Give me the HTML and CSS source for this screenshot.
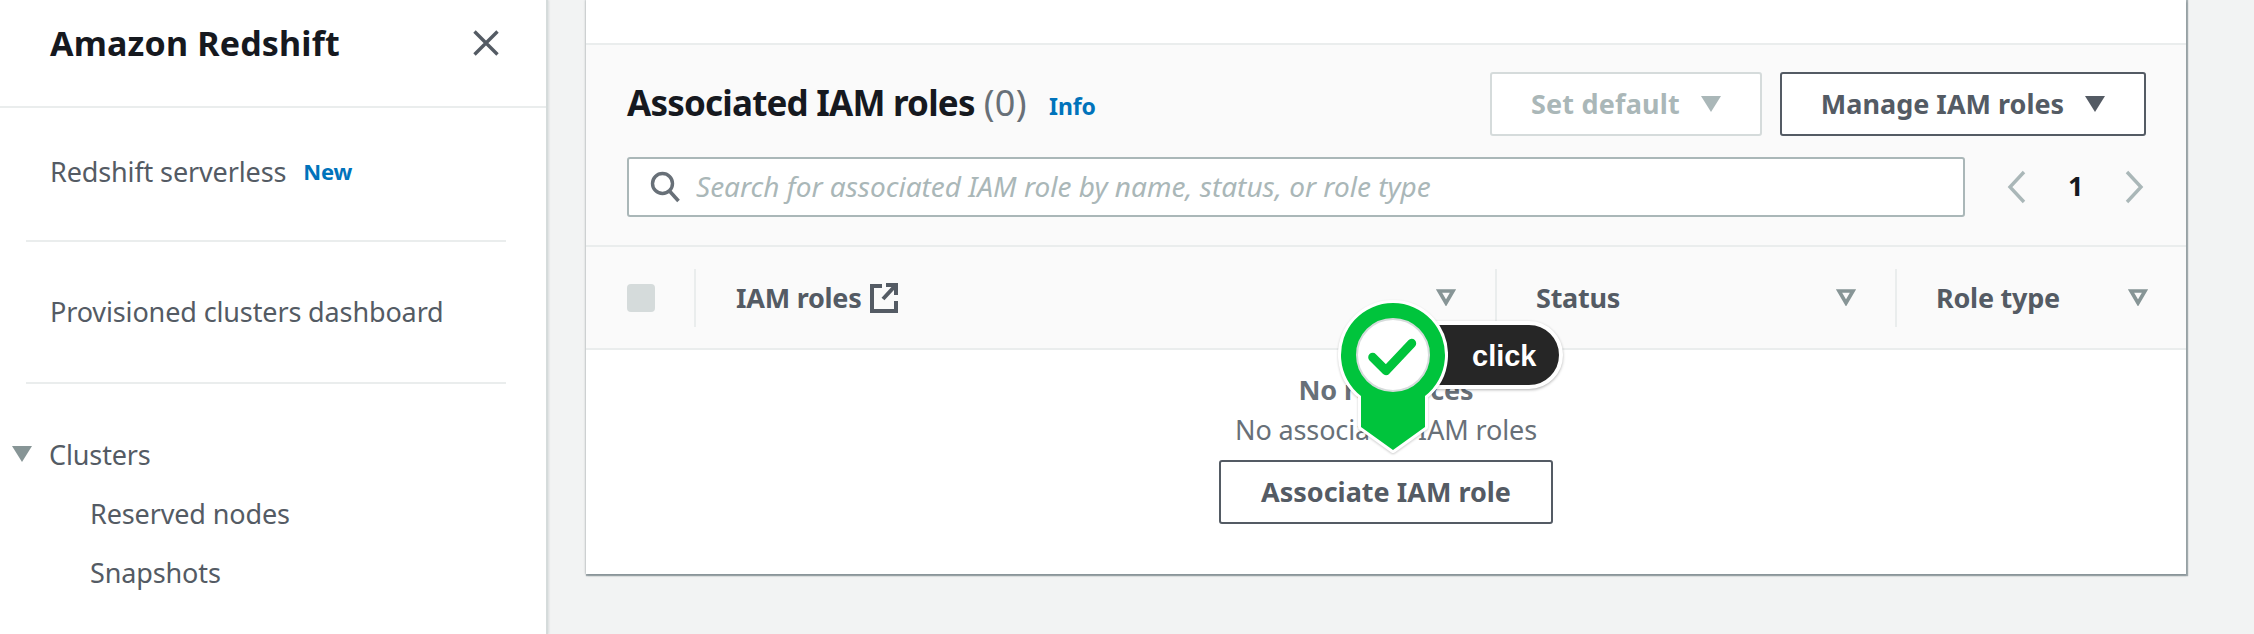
FILE: index.html
```html
<!DOCTYPE html>
<html lang="en">
<head>
  <meta charset="UTF-8">
  <title>Amazon Redshift | IAM roles</title>
  <link rel="stylesheet" href="styles.css">
</head>
<body>

  <div class="page">

    <!-- Side navigation -->
    <aside class="side">
      <div class="side-head">
        <h2>Amazon Redshift</h2>
        <svg class="close" width="26" height="26" viewBox="0 0 26 26"><path d="M1.500 1.500l23 23M24.500 1.500l-23 23" stroke="#545b64" stroke-width="3.4" fill="none"/></svg>
      </div>
      <div class="side-item side-item-first">
        <a>Redshift serverless</a>
        <span class="new">New</span>
      </div>
      <hr class="side-line">
      <div class="side-item">
        <a>Provisioned clusters dashboard</a>
      </div>
      <hr class="side-line">
      <div class="side-group">
        <svg width="20" height="16" viewBox="0 0 20 16"><path d="M0 0h20L10 16z" fill="#879596"/></svg>
        <a>Clusters</a>
      </div>
      <a class="side-sub first">Reserved nodes</a>
      <a class="side-sub">Snapshots</a>
    </aside>

    <!-- Main card -->
    <main class="main">
      <section class="card">
        <div class="card-top"></div>

        <div class="card-head">
          <div class="title-row">
            <h1><span class="title-text">Associated IAM roles</span> <span class="count">(0)</span></h1>
            <a class="info">Info</a>
            <div class="actions">
              <button class="btn btn-off">Set default
                <svg width="20" height="16" viewBox="0 0 20 16"><path d="M0 0h20L10 16z" fill="#aab7b8"/></svg>
              </button>
              <button class="btn btn-manage">Manage IAM roles
                <svg width="20" height="16" viewBox="0 0 20 16"><path d="M0 0h20L10 16z" fill="#545b64"/></svg>
              </button>
            </div>
          </div>
          <div class="search-row">
            <div class="search">
              <svg width="30" height="32" viewBox="0 0 30 32"><circle cx="12.500" cy="12.500" r="10" stroke="#687078" stroke-width="3.4" fill="none"/><path d="M19.500 20l9 10" stroke="#687078" stroke-width="3.6" fill="none"/></svg>
              <span class="search-text">Search for associated IAM role by name, status, or role type</span>
            </div>
            <div class="pager">
              <svg width="20" height="34" viewBox="0 0 20 34"><path d="M17 2L3 17l14 15" stroke="#aab7b8" stroke-width="3.4" fill="none"/></svg>
              <span class="page-num">1</span>
              <svg width="20" height="34" viewBox="0 0 20 34"><path d="M3 2l14 15L3 32" stroke="#aab7b8" stroke-width="3.4" fill="none"/></svg>
            </div>
          </div>
        </div>

        <div class="table-head">
          <div class="col-check"><span class="check"></span></div>
          <div class="col col-name">
            <span class="th">IAM roles</span>
            <svg class="ext" width="28" height="30" viewBox="0 0 28 30"><path d="M12 3H2v25h24V18M16 2h10v10M25 3L13 16" stroke="#545b64" stroke-width="4" fill="none"/></svg>
            <svg class="filter" width="20" height="17" viewBox="0 0 20 17"><path d="M3 2h14l-7 12z" stroke="#879596" stroke-width="3.6" fill="none"/></svg>
          </div>
          <div class="col col-status">
            <span class="th">Status</span>
            <svg class="filter" width="20" height="17" viewBox="0 0 20 17"><path d="M3 2h14l-7 12z" stroke="#879596" stroke-width="3.6" fill="none"/></svg>
          </div>
          <div class="col col-type">
            <span class="th">Role type</span>
            <svg class="filter" width="20" height="17" viewBox="0 0 20 17"><path d="M3 2h14l-7 12z" stroke="#879596" stroke-width="3.6" fill="none"/></svg>
          </div>
        </div>

        <div class="empty">
          <strong>No resources</strong>
          <p>No associated IAM roles</p>
          <button class="btn btn-assoc">Associate IAM role</button>
        </div>
      </section>
    </main>

    <!-- Click marker over the page -->
    <div class="marker">
      <div class="pill">click</div>
      <svg class="pin" width="116" height="160" viewBox="0 0 116 160">
        <path class="pin-body" d="M26 99A52 52 0 1 1 90 99V130L58 153L26 130Z"/>
        <circle cx="58" cy="58" r="36" fill="#fff" stroke="#d5dbdb" stroke-width="2"/>
        <path d="M37.700 60.300L51 73.700L76.700 46.300" stroke="#00c43c" stroke-width="9" stroke-linecap="round" stroke-linejoin="round" fill="none"/>
      </svg>
    </div>

  </div>

</body>
</html>
```

FILE: styles.css
```css
* {
  box-sizing: border-box;
}

html, body {
  margin: 0;
  height: 634px;
  overflow: hidden;
}

body {
  background-color: #f2f3f3;
  color: #545b64;
  font-family: "Noto Sans", sans-serif;
  font-size: 27px;
  letter-spacing: -0.13px;
}

.page {
  position: relative;
  display: flex;
  height: 634px;
}

h1, h2, p {
  margin: 0;
}

/* Side navigation */

.side {
  width: 548px;
  flex: none;
  background-color: #fff;
  border-right: 2px solid #d5dbdb;
  box-shadow: 1px 0 2px rgba(0, 28, 36, 0.1);
}

.side-head {
  display: flex;
  justify-content: space-between;
  align-items: center;
  height: 108px;
  padding: 0 47px 20px 50px;
  border-bottom: 2px solid #eaeded;
}

.side-head h2 {
  color: #16191f;
  font-size: 34px;
  font-weight: 700;
  letter-spacing: 0.17px;
}

.side-item {
  display: flex;
  align-items: center;
  gap: 17px;
  height: 140px;
  padding-bottom: 2px;
  padding-left: 50px;
}

.side-item-first {
  height: 132px;
  padding-bottom: 6px;
}

.new, .info {
  color: #0073bb;
  font-size: 22px;
  font-weight: 700;
}

.side-line {
  height: 2px;
  margin: 0 40px 0 26px;
  border: none;
  background-color: #eaeded;
}

.side-group {
  display: flex;
  align-items: center;
  gap: 17px;
  height: 40px;
  margin-top: 50px;
  padding-left: 12px;
}

.side-sub {
  display: block;
  height: 40px;
  line-height: 40px;
  margin-top: 19px;
  padding-left: 90px;
}

.side-sub.first {
  margin-top: 20px;
}

/* Main card */

.main {
  flex: 1;
  padding-left: 38px;
}

.card {
  width: 1600px;
  height: 574px;
  background-color: #fff;
  box-shadow: 1px 1px 1px 1px rgba(0, 28, 36, 0.3), 1px 2px 2px rgba(0, 28, 36, 0.15), -1px 0 2px rgba(0, 28, 36, 0.15);
}

.card-top {
  height: 45px;
  border-bottom: 2px solid #eaeded;
}

.card-head {
  height: 202px;
  padding: 27px 40px 0 41px;
  background-color: #fafafa;
  border-bottom: 2px solid #eaeded;
}

.title-row {
  display: flex;
  align-items: center;
  height: 64px;
}

.title-row h1 {
  padding-bottom: 4px;
  color: #16191f;
  font-size: 35px;
  font-weight: 700;
}

.title-text {
  letter-spacing: -0.8px;
}

.count {
  color: #687078;
  font-size: 36px;
  font-weight: 400;
  letter-spacing: 0.4px;
}

.info {
  margin-left: 22px;
  padding-top: 4px;
  font-size: 23px;
}

.actions {
  display: flex;
  gap: 18px;
  margin-left: auto;
}

.btn {
  display: flex;
  align-items: center;
  justify-content: center;
  gap: 21px;
  height: 64px;
  padding-bottom: 2px;
  background-color: #fff;
  border: 2px solid #545b64;
  border-radius: 3px;
  color: #545b64;
  font-family: inherit;
  font-size: 27px;
  font-weight: 700;
}

.btn-off {
  width: 272px;
  border-color: #d5dbdb;
  color: #aab7b8;
  letter-spacing: 0.2px;
}

.btn-manage {
  width: 366px;
}

.search-row {
  display: flex;
  align-items: center;
  margin-top: 21px;
}

.search {
  display: flex;
  align-items: center;
  gap: 16px;
  width: 1338px;
  height: 60px;
  padding-left: 21px;
  background-color: #fff;
  border: 2px solid #aab7b8;
  border-radius: 3px;
  color: #aab7b8;
  font-style: italic;
  font-size: 28px;
  letter-spacing: 0;
}

.search-text {
  padding-bottom: 2px;
}

.pager {
  display: flex;
  align-items: center;
  gap: 41px;
  margin-left: 42px;
  color: #16191f;
  font-weight: 700;
}

.page-num {
  padding-bottom: 3px;
}

.table-head {
  display: flex;
  align-items: center;
  height: 103px;
  background-color: #fafafa;
  border-bottom: 2px solid #eaeded;
}

.col-check {
  width: 108px;
  padding-left: 41px;
}

.check {
  display: block;
  width: 28px;
  height: 28px;
  border-radius: 4px;
  background-color: #d5dbdb;
}

.col {
  display: flex;
  align-items: center;
  height: 58px;
  border-left: 2px solid #eaeded;
  padding-left: 39px;
}

.col-name {
  width: 801px;
  padding-left: 40px;
}

.col-status {
  width: 400px;
}

.col-type {
  flex: 1;
}

.th {
  font-weight: 700;
  letter-spacing: -0.25px;
}

.ext {
  margin-left: 8px;
}

.filter {
  margin-left: auto;
  margin-right: 39px;
}

.col-type .filter {
  margin-right: 38px;
}

.empty {
  display: flex;
  flex-direction: column;
  align-items: center;
  padding-top: 20px;
}

.empty strong, .empty p {
  height: 40px;
  line-height: 40px;
  color: #687078;
}

.btn-assoc {
  width: 334px;
  margin-top: 10px;
}

/* Click marker */

.marker {
  position: absolute;
  left: 1335px;
  top: 297px;
  width: 228px;
  height: 160px;
}

.pin {
  position: absolute;
  left: 0;
  top: 0;
  overflow: visible;
  filter: drop-shadow(0 1px 1px rgba(0, 0, 0, 0.2));
}

.pin-body {
  fill: #00c43c;
  stroke: #fff;
  stroke-width: 6px;
  stroke-linejoin: round;
  paint-order: stroke;
}

.pill {
  position: absolute;
  left: 64px;
  top: 24px;
  width: 164px;
  height: 68px;
  padding-left: 69px;
  line-height: 62px;
  background-color: #262626;
  border: 4px solid #fff;
  border-radius: 34px;
  box-shadow: 0 1px 3px rgba(0, 0, 0, 0.3);
  color: #fff;
  font-family: "Liberation Sans", sans-serif;
  font-size: 29px;
  font-weight: 700;
  letter-spacing: 0;
}
```
